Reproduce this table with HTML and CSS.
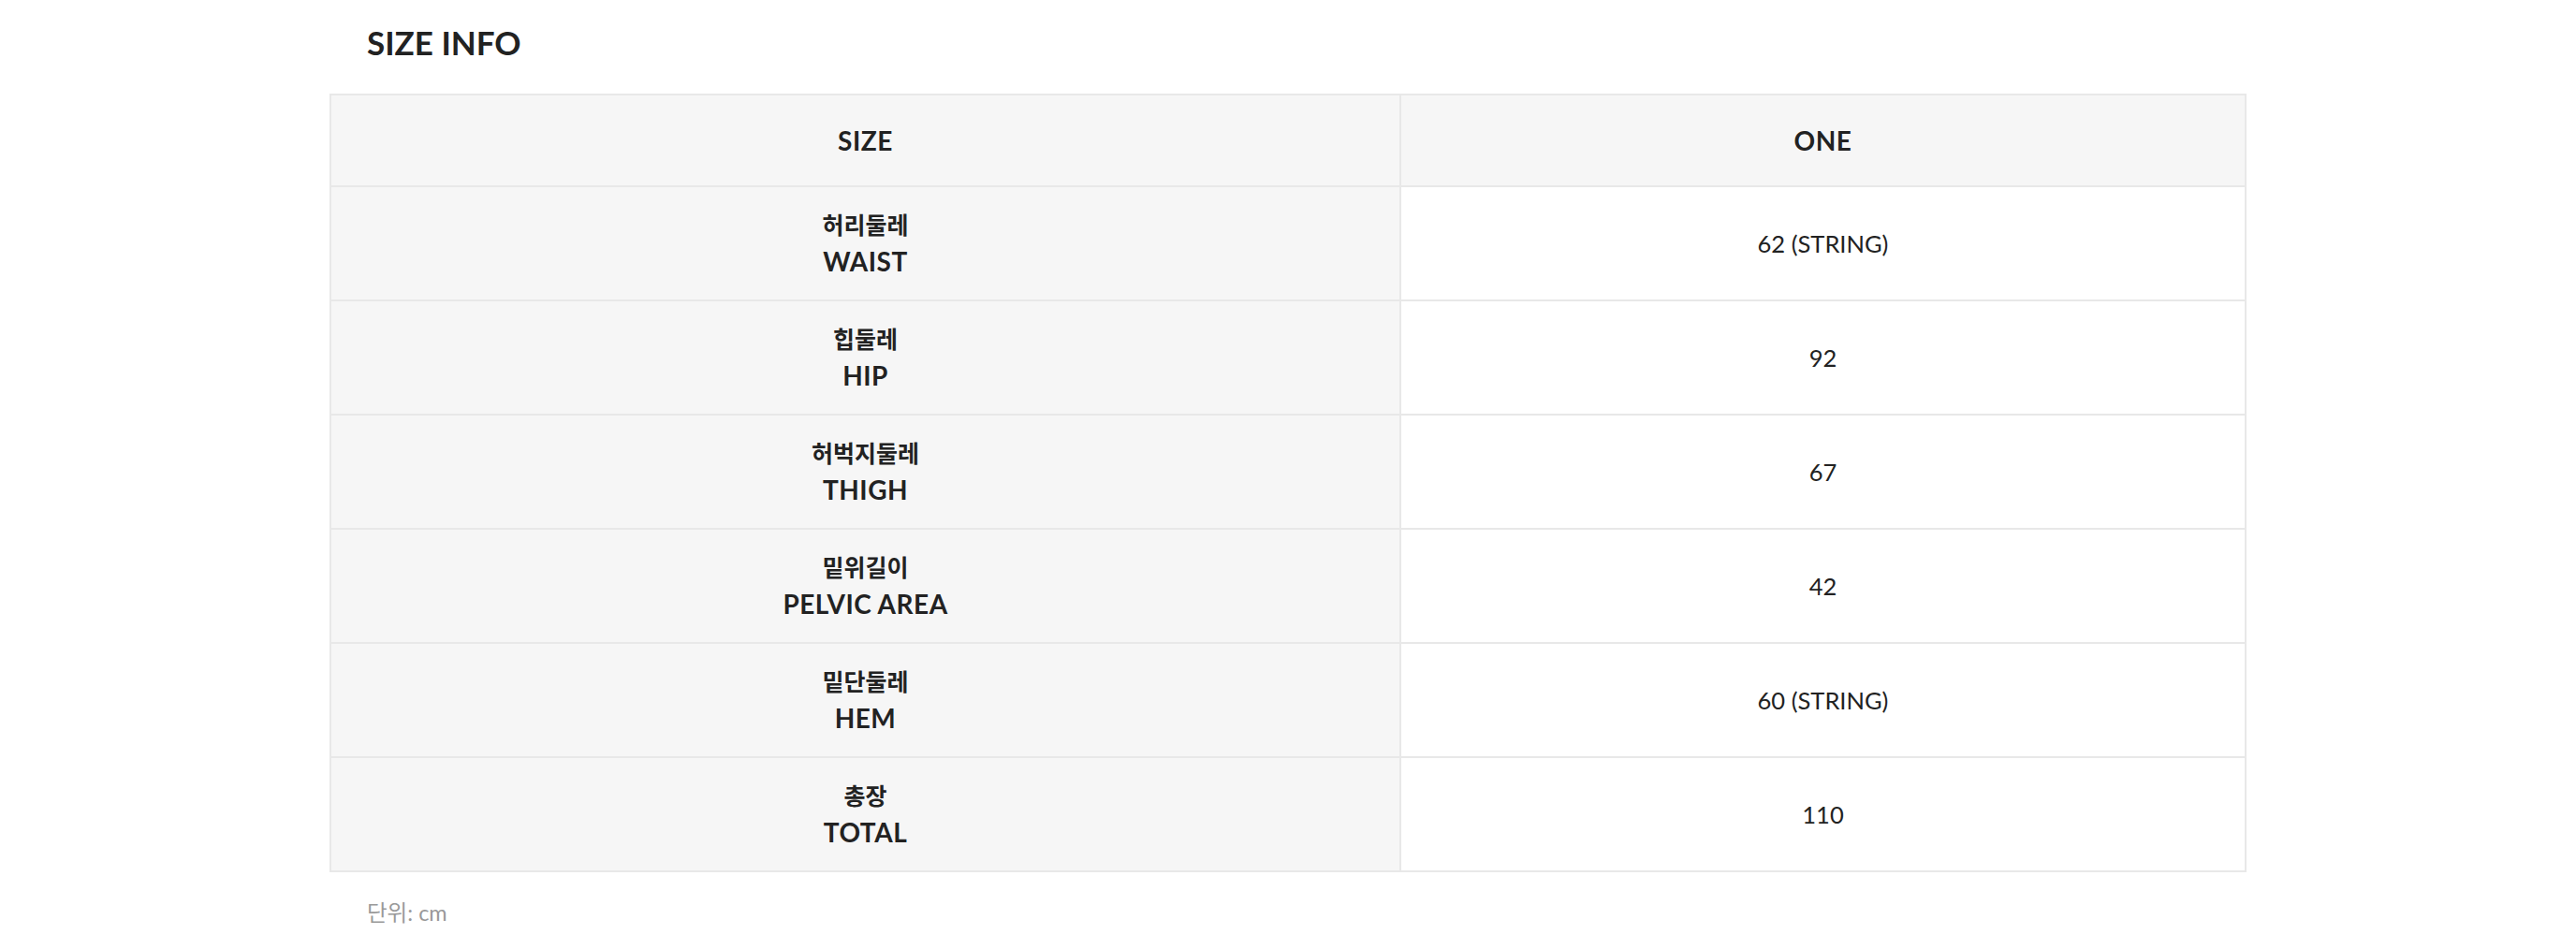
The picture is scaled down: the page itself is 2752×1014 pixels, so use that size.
FILE: index.html
```html
<!DOCTYPE html>
<html lang="ko">
<head>
<meta charset="utf-8">
<title>SIZE INFO</title>
<link rel="stylesheet" href="styles.css">
</head>
<body>
<section class="size-info">
  <h2 class="title">SIZE INFO</h2>
  <table class="size-table">
    <colgroup><col class="col-label"><col class="col-value"></colgroup>
    <thead>
      <tr><th class="head">SIZE</th><th class="head">ONE</th></tr>
    </thead>
    <tbody>
      <tr><th class="label"><span class="ko">허리둘레</span><span class="en">WAIST</span></th><td class="value">62 (STRING)</td></tr>
      <tr><th class="label"><span class="ko">힙둘레</span><span class="en">HIP</span></th><td class="value">92</td></tr>
      <tr><th class="label"><span class="ko">허벅지둘레</span><span class="en">THIGH</span></th><td class="value">67</td></tr>
      <tr><th class="label"><span class="ko">밑위길이</span><span class="en">PELVIC AREA</span></th><td class="value">42</td></tr>
      <tr><th class="label"><span class="ko">밑단둘레</span><span class="en">HEM</span></th><td class="value">60 (STRING)</td></tr>
      <tr><th class="label"><span class="ko">총장</span><span class="en">TOTAL</span></th><td class="value">110</td></tr>
    </tbody>
  </table>
  <p class="note">단위: cm</p>
</section>
</body>
</html>
```
FILE: styles.css
```css
html, body {
  margin: 0;
  padding: 0;
  background: #ffffff;
}
body {
  font-family: Lato, "Noto Sans CJK KR", sans-serif;
  color: #222222;
}
.size-info {
  width: 2048px;
  margin: 0 auto;
  padding-top: 26px;
}
.title {
  margin: 0 0 36px 0;
  padding-left: 40px;
  font-size: 35px;
  line-height: 38px;
  font-weight: 700;
  color: #222222;
}
.size-table {
  width: 2048px;
  table-layout: fixed;
  border-collapse: collapse;
  border: 2px solid #e8e8e8;
}
.col-label { width: 1143px; }
.size-table th,
.size-table td {
  border: 2px solid #e8e8e8;
  text-align: center;
  vertical-align: middle;
  padding: 0;
}
.head {
  height: 96px;
  background: #f6f6f6;
  font-size: 28px;
  font-weight: 700;
  letter-spacing: 0.6px;
}
.label {
  height: 120px;
  background: #f6f6f6;
  font-weight: 700;
}
.label .ko,
.label .en {
  display: block;
  line-height: 39px;
}
.label .ko {
  font-size: 25px;
}
.label .en {
  font-size: 28px;
  letter-spacing: 0.5px;
}
.value {
  background: #ffffff;
  font-size: 25.5px;
  font-weight: 400;
}
.note {
  margin: 28px 0 0 0;
  padding-left: 40px;
  font-size: 23.5px;
  line-height: 30px;
  color: #999999;
}
```
